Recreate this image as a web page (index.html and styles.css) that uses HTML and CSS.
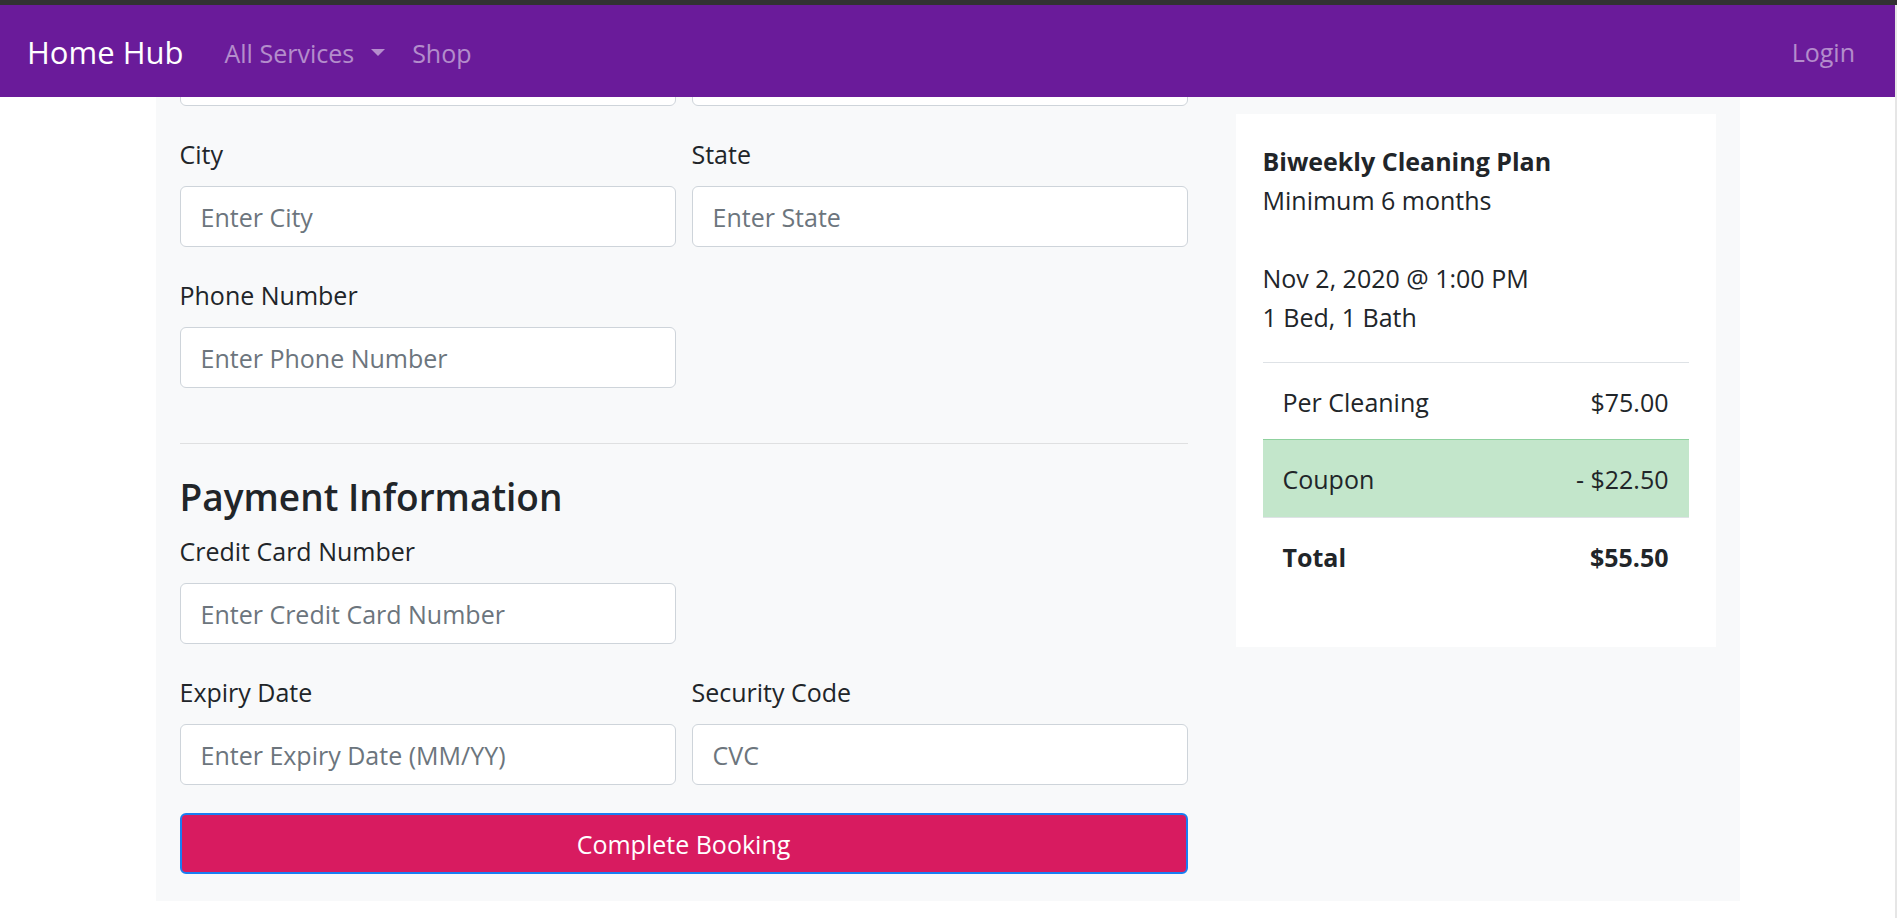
FILE: index.html
```html
<!DOCTYPE html>
<html lang="en">
<head>
<meta charset="utf-8">
<title>Home Hub – Checkout</title>
<link rel="stylesheet" href="styles.css">
</head>
<body>
<div class="topstrip"></div>
<div class="window">
  <div class="app">
    <nav class="navbar">
      <a class="brand" href="#">Home Hub</a>
      <ul class="nav">
        <li><a class="nav-link" href="#">All Services<span class="caret"></span></a></li>
        <li><a class="nav-link" href="#">Shop</a></li>
      </ul>
      <a class="nav-link login" href="#">Login</a>
    </nav>

    <main class="panel">
      <form class="checkout">
        <div class="clip">
          <div class="row2">
            <input class="control" type="text">
            <input class="control" type="text">
          </div>
        </div>

        <div class="row2 field">
          <div>
            <label class="label">City</label>
            <input class="control" type="text" placeholder="Enter City">
          </div>
          <div>
            <label class="label">State</label>
            <input class="control" type="text" placeholder="Enter State">
          </div>
        </div>

        <div class="row2 field">
          <div>
            <label class="label">Phone Number</label>
            <input class="control" type="text" placeholder="Enter Phone Number">
          </div>
        </div>

        <hr class="divider">

        <h4 class="section-title">Payment Information</h4>

        <div class="row2 field field-tight">
          <div>
            <label class="label">Credit Card Number</label>
            <input class="control" type="text" placeholder="Enter Credit Card Number">
          </div>
        </div>

        <div class="row2 field">
          <div>
            <label class="label">Expiry Date</label>
            <input class="control" type="text" placeholder="Enter Expiry Date (MM/YY)">
          </div>
          <div>
            <label class="label">Security Code</label>
            <input class="control" type="text" placeholder="CVC">
          </div>
        </div>

        <button class="btn-book" type="button">Complete Booking</button>
      </form>

      <aside class="summary-col">
        <div class="card">
          <div class="plan">
            <div class="plan-name">Biweekly Cleaning Plan</div>
            <div>Minimum 6 months</div>
            <div class="blank">&nbsp;</div>
            <div>Nov 2, 2020 @ 1:00 PM</div>
            <div>1 Bed, 1 Bath</div>
          </div>
          <table class="price-table">
            <tbody>
              <tr>
                <td>Per Cleaning</td>
                <td class="amt">$75.00</td>
              </tr>
              <tr class="success">
                <td>Coupon</td>
                <td class="amt">- $22.50</td>
              </tr>
              <tr class="total">
                <td>Total</td>
                <td class="amt">$55.50</td>
              </tr>
            </tbody>
          </table>
        </div>
      </aside>
    </main>
  </div>
  <div class="edge"></div>
</div>
</body>
</html>
```
FILE: styles.css
```css
* { box-sizing: border-box; }

html, body {
  margin: 0;
  padding: 0;
  height: 918px;
  overflow: hidden;
  background: #ffffff;
  font-family: "Open Sans", "Noto Sans", sans-serif;
  font-size: 25px;
  color: #212529;
}

.topstrip {
  height: 5px;
  background: #323232;
}

.window {
  display: flex;
  height: 913px;
}

.app {
  flex: 1;
  min-width: 0;
}

.edge {
  width: 2px;
  background: #e6e6e6;
}

/* ---------- navbar ---------- */
.navbar {
  height: 92px;
  background: #6a1b9a;
  display: flex;
  align-items: center;
  padding: 3px 40px 0 27px;
}

.brand {
  color: #ffffff;
  font-size: 31px;
  text-decoration: none;
  line-height: 1.3;
}

.nav {
  list-style: none;
  margin: 0 0 0 41px;
  padding: 0;
  display: flex;
  gap: 27px;
}

.nav-link {
  color: rgba(255, 255, 255, 0.5);
  text-decoration: none;
  font-size: 25px;
  line-height: 1.3;
}

.caret {
  display: inline-block;
  margin-left: 17px;
  vertical-align: 0.27em;
  border-top: 7.5px solid rgba(255, 255, 255, 0.5);
  border-left: 7.5px solid transparent;
  border-right: 7.5px solid transparent;
}

.login {
  margin-left: auto;
}

/* ---------- page panel ---------- */
.panel {
  width: 1584px;
  margin: 0 auto;
  background: #f8f9fa;
  padding: 0 24px 27px;
  display: flex;
  gap: 48px;
  align-items: flex-start;
}

.checkout {
  flex: 0 0 1008px;
  margin: 0;
}

.clip {
  height: 9px;
  overflow: hidden;
  display: flex;
  align-items: flex-end;
}

.clip .row2 {
  width: 100%;
}

.row2 {
  display: grid;
  grid-template-columns: 1fr 1fr;
  column-gap: 16px;
}

.field {
  margin-top: 29px;
}

.field-tight {
  margin-top: 12px;
}

.label {
  display: block;
  line-height: 38px;
  margin-bottom: 13px;
  font-size: 25px;
}

.control {
  display: block;
  width: 100%;
  height: 61px;
  border: 1px solid #ced4da;
  border-radius: 6px;
  background: #ffffff;
  padding: 0 20px;
  font-family: inherit;
  font-size: 25px;
  color: #495057;
}

.control::placeholder {
  color: #6c757d;
  opacity: 1;
}

.divider {
  margin: 55px 0 0;
  border: 0;
  border-top: 1px solid #dfe0e1;
  height: 0;
}

.section-title {
  margin: 30px 0 0;
  font-size: 37px;
  font-weight: 600;
  line-height: 46px;
  color: #212529;
}

.btn-book {
  display: block;
  width: 100%;
  height: 61px;
  margin-top: 28px;
  background: #d81b60;
  border: 2px solid #1a7ef2;
  border-radius: 6px;
  color: #ffffff;
  font-family: inherit;
  font-size: 25px;
}

/* ---------- summary card ---------- */
.summary-col {
  flex: 0 0 480px;
}

.card {
  margin-top: 17px;
  background: #ffffff;
  padding: 28px 27px 28px;
}

.plan {
  line-height: 39px;
  margin-bottom: 25px;
}

.plan-name {
  font-weight: 700;
}

.price-table {
  width: 100%;
  border-collapse: collapse;
  margin-bottom: 25px;
}

.price-table td {
  padding: 20px 20px 18px;
  line-height: 38.4px;
  border-top: 1px solid #dee2e6;
}

.price-table .amt {
  text-align: right;
}

.price-table .success td {
  background: #c3e6cb;
  border-top-color: #8fd19e;
}

.price-table .total td {
  font-weight: 700;
}
```
